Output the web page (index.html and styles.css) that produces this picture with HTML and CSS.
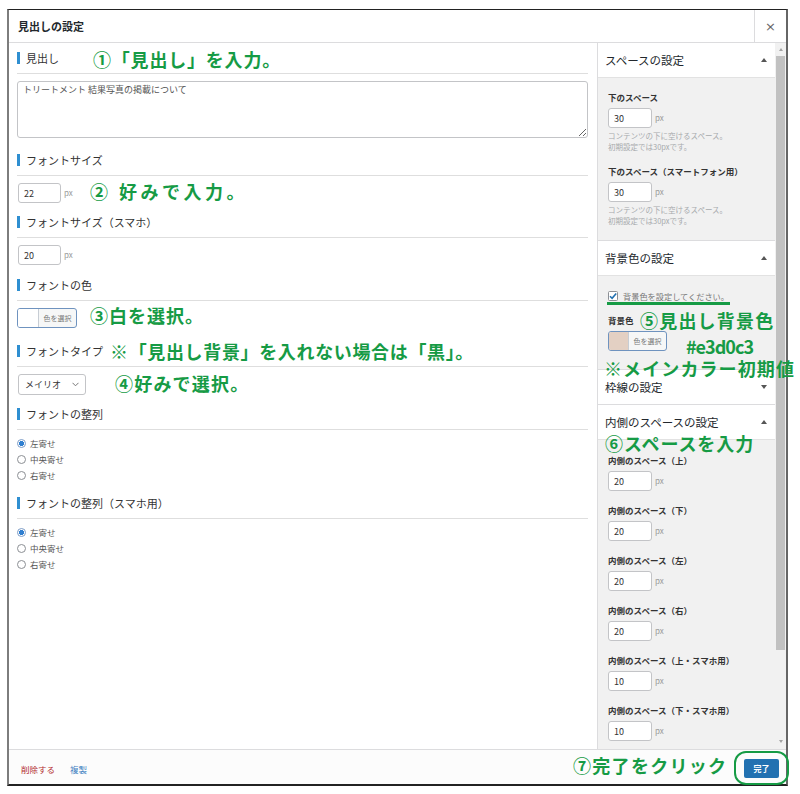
FILE: index.html
```html
<!DOCTYPE html>
<html lang="ja">
<head>
<meta charset="utf-8">
<title>見出しの設定</title>
<link rel="stylesheet" href="styles.css">
</head>
<body>
<div class="page">
  <div class="frame">
    <div class="header">
      <div class="header-title">見出しの設定</div>
      <div class="close">×</div>
    </div>
    <div class="body">
      <div class="main">
        <div class="field gap-12">
          <div class="field-label"><span class="bar"></span>見出し</div>
          <textarea class="textarea" readonly spellcheck="false">トリートメント 結果写真の掲載について</textarea>
        </div>
        <div class="field gap-9">
          <div class="field-label"><span class="bar"></span>フォントサイズ</div>
          <div class="unit-row"><input class="num" type="text" value="22" readonly><span class="unit">px</span></div>
        </div>
        <div class="field gap-10">
          <div class="field-label"><span class="bar"></span>フォントサイズ（スマホ）</div>
          <div class="unit-row"><input class="num" type="text" value="20" readonly><span class="unit">px</span></div>
        </div>
        <div class="field gap-13">
          <div class="field-label"><span class="bar"></span>フォントの色</div>
          <div class="color-btn"><span class="swatch"></span><span class="color-text">色を選択</span></div>
        </div>
        <div class="field gap-9">
          <div class="field-label"><span class="bar"></span>フォントタイプ</div>
          <div class="select"><span>メイリオ</span><svg class="chev" width="7" height="5" viewBox="0 0 7 5"><path d="M0.5 0.8 L3.5 3.8 L6.5 0.8" fill="none" stroke="#777" stroke-width="1"/></svg></div>
        </div>
        <div class="field gap-10">
          <div class="field-label"><span class="bar"></span>フォントの整列</div>
          <div class="radio-list">
            <div class="radio-row"><span class="radio checked"></span>左寄せ</div>
            <div class="radio-row"><span class="radio"></span>中央寄せ</div>
            <div class="radio-row"><span class="radio"></span>右寄せ</div>
          </div>
        </div>
        <div class="field">
          <div class="field-label"><span class="bar"></span>フォントの整列（スマホ用）</div>
          <div class="radio-list">
            <div class="radio-row"><span class="radio checked"></span>左寄せ</div>
            <div class="radio-row"><span class="radio"></span>中央寄せ</div>
            <div class="radio-row"><span class="radio"></span>右寄せ</div>
          </div>
        </div>
      </div>

      <div class="sidebar">
        <section class="panel">
          <div class="panel-head"><span>スペースの設定</span><span class="tri tri-up"></span></div>
          <div class="panel-body pb-14">
            <div class="s-field">
              <div class="s-label">下のスペース</div>
              <div class="unit-row"><input class="num num-s" type="text" value="30" readonly><span class="unit">px</span></div>
              <p class="help">コンテンツの下に空けるスペース。<br>初期設定では30pxです。</p>
            </div>
            <div class="s-field">
              <div class="s-label">下のスペース（スマートフォン用）</div>
              <div class="unit-row"><input class="num num-s" type="text" value="30" readonly><span class="unit">px</span></div>
              <p class="help">コンテンツの下に空けるスペース。<br>初期設定では30pxです。</p>
            </div>
          </div>
        </section>
        <section class="panel">
          <div class="panel-head"><span>背景色の設定</span><span class="tri tri-up"></span></div>
          <div class="panel-body pb-18">
            <div class="check-row">
              <svg class="checkbox" width="10" height="10" viewBox="0 0 10 10"><rect x="0.5" y="0.5" width="9" height="9" rx="1" fill="#fff" stroke="#8c8f94"/><path d="M2 5.2 L4.1 7.3 L8.2 2.4" fill="none" stroke="#2271b1" stroke-width="1.6"/></svg>
              <span>背景色を設定してください。</span>
            </div>
            <div class="s-label bg-label">背景色</div>
            <div class="color-btn color-btn-s"><span class="swatch swatch-beige"></span><span class="color-text">色を選択</span></div>
          </div>
        </section>
        <section class="panel">
          <div class="panel-head collapsed"><span>枠線の設定</span><span class="tri tri-down"></span></div>
        </section>
        <section class="panel">
          <div class="panel-head"><span>内側のスペースの設定</span><span class="tri tri-up"></span></div>
          <div class="panel-body pt-14">
            <div class="s-field">
              <div class="s-label">内側のスペース（上）</div>
              <div class="unit-row"><input class="num num-s" type="text" value="20" readonly><span class="unit">px</span></div>
            </div>
            <div class="s-field">
              <div class="s-label">内側のスペース（下）</div>
              <div class="unit-row"><input class="num num-s" type="text" value="20" readonly><span class="unit">px</span></div>
            </div>
            <div class="s-field">
              <div class="s-label">内側のスペース（左）</div>
              <div class="unit-row"><input class="num num-s" type="text" value="20" readonly><span class="unit">px</span></div>
            </div>
            <div class="s-field">
              <div class="s-label">内側のスペース（右）</div>
              <div class="unit-row"><input class="num num-s" type="text" value="20" readonly><span class="unit">px</span></div>
            </div>
            <div class="s-field">
              <div class="s-label">内側のスペース（上・スマホ用）</div>
              <div class="unit-row"><input class="num num-s" type="text" value="10" readonly><span class="unit">px</span></div>
            </div>
            <div class="s-field">
              <div class="s-label">内側のスペース（下・スマホ用）</div>
              <div class="unit-row"><input class="num num-s" type="text" value="10" readonly><span class="unit">px</span></div>
            </div>
          </div>
        </section>
      </div>

      <div class="scrollbar">
        <span class="sb-arrow sb-up"></span>
        <span class="sb-thumb"></span>
        <span class="sb-fill"></span>
        <span class="sb-arrow sb-down"></span>
      </div>
    </div>
    <div class="footer">
      <span class="link-delete">削除する</span>
      <span class="link-copy">複製</span>
      <span class="done-btn">完了</span>
    </div>
  </div>

  <div class="note note-1">①「見出し」を入力。</div>
  <div class="note note-2">② 好みで入力。</div>
  <div class="note note-3">③白を選択。</div>
  <div class="note note-4">※「見出し背景」を入れない場合は「黒」。</div>
  <div class="note note-5">④好みで選択。</div>
  <div class="note note-6">⑤見出し背景色</div>
  <div class="note note-7">#e3d0c3</div>
  <div class="note note-8">※メインカラー初期値</div>
  <div class="note note-9">⑥スペースを入力</div>
  <div class="note note-10">⑦完了をクリック</div>
  <div class="ring"></div>
</div>
</body>
</html>
```

FILE: styles.css
```css
* { box-sizing: border-box; }

html, body {
  margin: 0;
  padding: 0;
  background: #fff;
}

body {
  font-family: "Noto Sans CJK JP", "Noto Sans", sans-serif;
  color: #333;
}

.page {
  position: relative;
  width: 800px;
  height: 794px;
  overflow: hidden;
  padding-top: 9px;
  padding-left: 7px;
}

.frame {
  width: 781px;
  height: 777px;
  border-top: 1px solid #222;
  border-left: 2px solid #7d7d7d;
  border-right: 2px solid #666;
  border-bottom: 2px solid #222;
  display: flex;
  flex-direction: column;
  background: #fff;
}

/* header */
.header {
  height: 33px;
  flex: none;
  border-bottom: 1px solid #dcdcde;
  display: flex;
  align-items: stretch;
}
.header-title {
  flex: 1;
  display: flex;
  align-items: center;
  padding-left: 9px;
  font-size: 11px;
  font-weight: bold;
  color: #23282d;
}
.close {
  width: 32px;
  border-left: 1px solid #dcdcde;
  display: flex;
  align-items: center;
  justify-content: center;
  font-size: 13px;
  color: #666;
  font-family: "DejaVu Sans", sans-serif;
}

/* body */
.body {
  height: 706px;
  flex: none;
  display: flex;
  overflow: hidden;
}

.main {
  width: 588px;
  flex: none;
  padding: 5px 9px 0 8px;
  background: #fff;
}

.field.gap-9 { margin-bottom: 9px; }
.field.gap-10 { margin-bottom: 10px; }
.field.gap-12 { margin-bottom: 12px; }
.field.gap-13 { margin-bottom: 13px; }

.field-label {
  display: flex;
  align-items: center;
  gap: 6px;
  height: 26px;
  padding-bottom: 5px;
  border-bottom: 1px solid #dedede;
  margin-bottom: 7px;
  font-size: 11px;
  color: #333;
}
.bar {
  width: 3px;
  height: 12px;
  background: #2f8fd1;
  flex: none;
}

.textarea {
  display: block;
  width: 100%;
  height: 57px;
  border: 1px solid #c3c4c7;
  border-radius: 3px;
  padding: 2px 5px;
  margin: 0;
  font-family: "Noto Sans CJK JP", sans-serif;
  font-size: 9px;
  line-height: 11px;
  color: #555;
  resize: vertical;
  outline: none;
  background: #fff;
}

.unit-row {
  display: flex;
  align-items: center;
  gap: 3px;
  height: 20px;
}
.num {
  width: 43px;
  height: 20px;
  margin: 0 0 0 1px;
  padding: 0 0 0 5px;
  border: 1px solid #c3c4c7;
  border-radius: 3px;
  font-family: "Noto Sans CJK JP", sans-serif;
  font-size: 9px;
  color: #333;
  background: #fff;
  outline: none;
}
.num-s {
  width: 44px;
  margin-left: 0;
}
.unit {
  font-size: 8px;
  line-height: 10px;
  color: #999;
}

.color-btn {
  display: flex;
  width: 60px;
  height: 20px;
  border: 1px solid #6f93bf;
  border-radius: 3px;
  overflow: hidden;
  background: #f6f7f7;
}
.swatch {
  width: 21px;
  flex: none;
  background: #fff;
  border-right: 1px solid #c7cdd4;
}
.swatch-beige { background: #e3d0c3; width: 20px; }
.color-text {
  flex: 1;
  display: flex;
  align-items: center;
  justify-content: center;
  font-size: 7px;
  color: #777;
}
.color-btn-s { width: 59px; }

.select {
  display: flex;
  align-items: center;
  justify-content: space-between;
  width: 68px;
  height: 21px;
  margin-left: 1px;
  padding: 0 6px 0 6px;
  border: 1px solid #c3c4c7;
  border-radius: 3px;
  font-size: 9px;
  color: #333;
  background: #fff;
}
.chev { display: block; }

.radio-list { margin-top: -2px; }
.radio-row {
  display: flex;
  align-items: center;
  gap: 4px;
  height: 16px;
  font-size: 8.5px;
  color: #555;
}
.radio {
  width: 9px;
  height: 9px;
  border: 1px solid #8c8f94;
  border-radius: 50%;
  background: #fff;
  flex: none;
}
.radio.checked {
  border-color: #7d9dc7;
  background: radial-gradient(circle, #2f7fd0 0 2.3px, #fff 2.8px);
}

/* sidebar */
.sidebar {
  width: 178px;
  flex: none;
  border-left: 1px solid #dcdcde;
  background: #f1f1f1;
  overflow: hidden;
}
.panel {
  border-bottom: 1px solid #dcdcde;
}
.panel-head {
  height: 35px;
  background: #fff;
  border-bottom: 1px solid #e2e2e2;
  display: flex;
  align-items: center;
  justify-content: space-between;
  padding: 0 8px 0 7px;
  font-size: 11.5px;
  color: #23282d;
}
.panel-head.collapsed {
  height: 34px;
  border-bottom: none;
}
.tri {
  width: 0;
  height: 0;
  border-left: 3px solid transparent;
  border-right: 3px solid transparent;
}
.tri-up { border-bottom: 4px solid #555; }
.tri-down { border-top: 4px solid #555; }

.panel-body {
  padding: 13px 0 14px 10px;
}
.panel-body.pb-14 { padding-bottom: 14px; }
.panel-body.pb-18 { padding-bottom: 18px; }
.panel-body.pt-14 { padding-top: 14px; padding-bottom: 20px; }

.s-field + .s-field { margin-top: 13px; }
.s-label {
  font-size: 8.5px;
  font-weight: bold;
  line-height: 12px;
  color: #333;
  margin-bottom: 5px;
}
.help {
  margin: 2px 0 0 0;
  font-size: 7.5px;
  line-height: 11px;
  color: #a7aaad;
}

.check-row {
  display: flex;
  width: fit-content;
  align-items: center;
  gap: 5px;
  height: 16px;
  padding: 1px 1px 0 1px;
  margin-left: -1px;
  border-bottom: 3px solid #169b45;
  font-size: 8.2px;
  color: #777;
}
.checkbox { display: block; flex: none; }
.bg-label { margin-top: 9px; }

/* scrollbar */
.scrollbar {
  width: 11px;
  flex: none;
  background: #f1f1f1;
  display: flex;
  flex-direction: column;
  align-items: center;
}
.sb-arrow {
  width: 0;
  height: 0;
  border-left: 2.5px solid transparent;
  border-right: 2.5px solid transparent;
}
.sb-up {
  border-bottom: 3px solid #a3a3a3;
  margin-top: 5px;
  margin-bottom: 5px;
}
.sb-thumb {
  width: 9px;
  height: 594px;
  background: #c1c1c1;
}
.sb-fill { flex: 1; }
.sb-down {
  border-top: 3px solid #a3a3a3;
  margin-bottom: 6px;
}

/* footer */
.footer {
  height: 35px;
  flex: none;
  border-top: 1px solid #dcdcde;
  background: #fcfcfc;
  display: flex;
  align-items: center;
  padding: 3px 7px 0 12px;
  font-size: 8.5px;
}
.link-delete { color: #b32d2e; }
.link-copy { color: #3e7fc1; margin-left: 15px; }
.done-btn {
  margin-left: auto;
  width: 35px;
  height: 19px;
  border-radius: 2px;
  background: #2271b1;
  color: #fff;
  font-size: 8px;
  font-weight: bold;
  display: flex;
  align-items: center;
  justify-content: center;
}

/* annotations */
.note {
  position: absolute;
  white-space: nowrap;
  font-family: "Noto Sans CJK JP", sans-serif;
  font-weight: bold;
  font-size: 18px;
  line-height: 18px;
  letter-spacing: 1.2px;
  color: #169b45;
}
.note-1 { left: 93px; top: 50px; letter-spacing: 0.8px; }
.note-2 { left: 90px; top: 182px; letter-spacing: 3.5px; }
.note-3 { left: 90px; top: 306px; letter-spacing: 1px; }
.note-4 { left: 110px; top: 342px; letter-spacing: 0.65px; }
.note-5 { left: 115px; top: 374px; }
.note-6 { left: 640px; top: 311px; }
.note-7 { left: 686px; top: 337px; letter-spacing: -1px; }
.note-8 { left: 604px; top: 359px; letter-spacing: 1.1px; }
.note-9 { left: 605px; top: 434px; letter-spacing: 0.9px; }
.note-10 { left: 573px; top: 756px; letter-spacing: 1.3px; }

.ring {
  position: absolute;
  left: 734px;
  top: 751px;
  width: 55px;
  height: 34px;
  border: 2.5px solid #169b45;
  border-radius: 12px;
}
```
